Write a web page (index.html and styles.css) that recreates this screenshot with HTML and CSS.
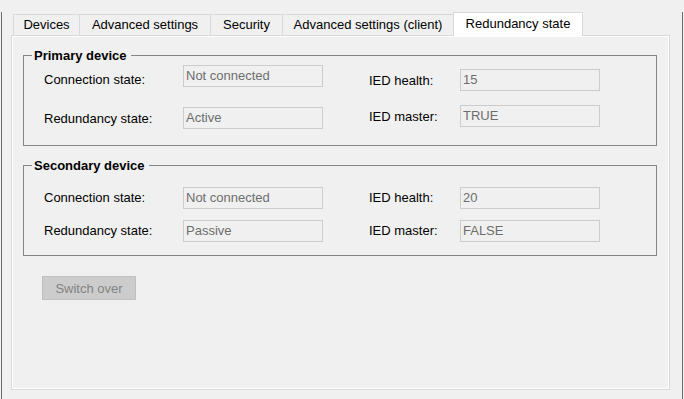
FILE: index.html
```html
<!DOCTYPE html>
<html lang="en">
<head>
  <meta charset="UTF-8" />
  <title>Redundancy state</title>
  <link rel="stylesheet" href="styles.css">
</head>
<body>
  <div class="window">
    <!-- Tab strip -->
    <div class="tabs">
      <div class="tab tab-devices">Devices</div>
      <div class="tab tab-advanced">Advanced settings</div>
      <div class="tab tab-security">Security</div>
      <div class="tab tab-client">Advanced settings (client)</div>
      <div class="tab tab-active">Redundancy state</div>
    </div>

    <!-- Tab page -->
    <div class="panel">
      <fieldset class="group group-primary">
        <legend>Primary device</legend>
        <div class="cols">
          <div class="col col-left">
            <div class="row"><span class="label label-low">Connection state:</span><span class="field">Not connected</span></div>
            <div class="row"><span class="label">Redundancy state:</span><span class="field">Active</span></div>
          </div>
          <div class="col col-right">
            <div class="row"><span class="label">IED health:</span><span class="field">15</span></div>
            <div class="row"><span class="label">IED master:</span><span class="field">TRUE</span></div>
          </div>
        </div>
      </fieldset>

      <fieldset class="group group-secondary">
        <legend>Secondary device</legend>
        <div class="cols">
          <div class="col col-left">
            <div class="row"><span class="label">Connection state:</span><span class="field">Not connected</span></div>
            <div class="row"><span class="label">Redundancy state:</span><span class="field">Passive</span></div>
          </div>
          <div class="col col-right">
            <div class="row"><span class="label">IED health:</span><span class="field">20</span></div>
            <div class="row"><span class="label">IED master:</span><span class="field">FALSE</span></div>
          </div>
        </div>
      </fieldset>

      <button class="btn" disabled>Switch over</button>
    </div>
  </div>
</body>
</html>
```

FILE: styles.css
```css
* {
  margin: 0;
  padding: 0;
  box-sizing: border-box;
}

body {
  font-family: 'Liberation Sans', Arial, sans-serif;
  font-size: 13px;
  color: #000000;
  background: #f0f0f0;
  width: 684px;
  height: 399px;
  overflow: hidden;
}

/* Window frame */
.window {
  margin-left: 1px;
  width: 682px;
  height: 399px;
  border-left: 1px solid #6d6d6d;
  border-right: 1px solid #6d6d6d;
}

/* Tabs */
.tabs {
  display: flex;
  align-items: flex-end;
  height: 23px;
  margin: 12px 0 0 11px;
}

.tab {
  height: 21px;
  line-height: 20px;
  text-align: center;
  white-space: nowrap;
  background: #f0f0f0;
  border-top: 1px solid #d9d9d9;
  border-left: 1px solid #d9d9d9;
}

.tab-devices { width: 66px; }
.tab-advanced { width: 131px; }
.tab-security { width: 72px; }
.tab-client { width: 171px; }

.tab-active {
  position: relative;
  z-index: 1;
  width: 130px;
  height: 24px;
  line-height: 22px;
  margin-bottom: -1px;
  background: #ffffff;
  border-right: 1px solid #d9d9d9;
}

/* Tab page */
.panel {
  margin-left: 9px;
  width: 659px;
  height: 355px;
  padding: 12px 0 0 11px;
  background: #f0f0f0;
  border: 1px solid #d9d9d9;
  box-shadow: inset 0 0 0 1px #ffffff;
}

/* Group boxes */
.group {
  width: 634px;
  border: 1px solid #858585;
  padding-left: 8px;
  min-inline-size: 0;
}

.group legend {
  font-weight: bold;
  line-height: 15px;
  padding: 0 4px 0 2px;
}

.group-primary {
  padding-top: 1px;
  padding-bottom: 16px;
}

.group-secondary {
  margin-top: 12px;
  padding-top: 14px;
  padding-bottom: 13px;
}

.cols {
  display: flex;
  align-items: flex-start;
  margin-left: 12px;
}

.col {
  display: flex;
  flex-direction: column;
  gap: 11px;
}

.col-right {
  margin-left: 46px;
}

.group-primary .col-left { gap: 21px; }
.group-primary .col-right { gap: 14px; margin-top: 5px; }

.row {
  display: grid;
  grid-template-columns: 139px 140px;
  align-items: center;
  height: 22px;
}

.col-right .row {
  grid-template-columns: 91px 140px;
}

.label {
  white-space: nowrap;
}

.label-low {
  margin-top: 8px;
}

.group-secondary .label {
  margin-bottom: 2px;
}

.field {
  height: 22px;
  line-height: 20px;
  padding-left: 2px;
  color: #6d6d6d;
  background: #f0f0f0;
  border: 1px solid #cccccc;
}

/* Button */
.btn {
  display: block;
  margin: 20px 0 0 19px;
  width: 94px;
  height: 24px;
  font-family: inherit;
  font-size: 13px;
  color: #838383;
  background: #cccccc;
  border: 1px solid #bfbfbf;
}
```
